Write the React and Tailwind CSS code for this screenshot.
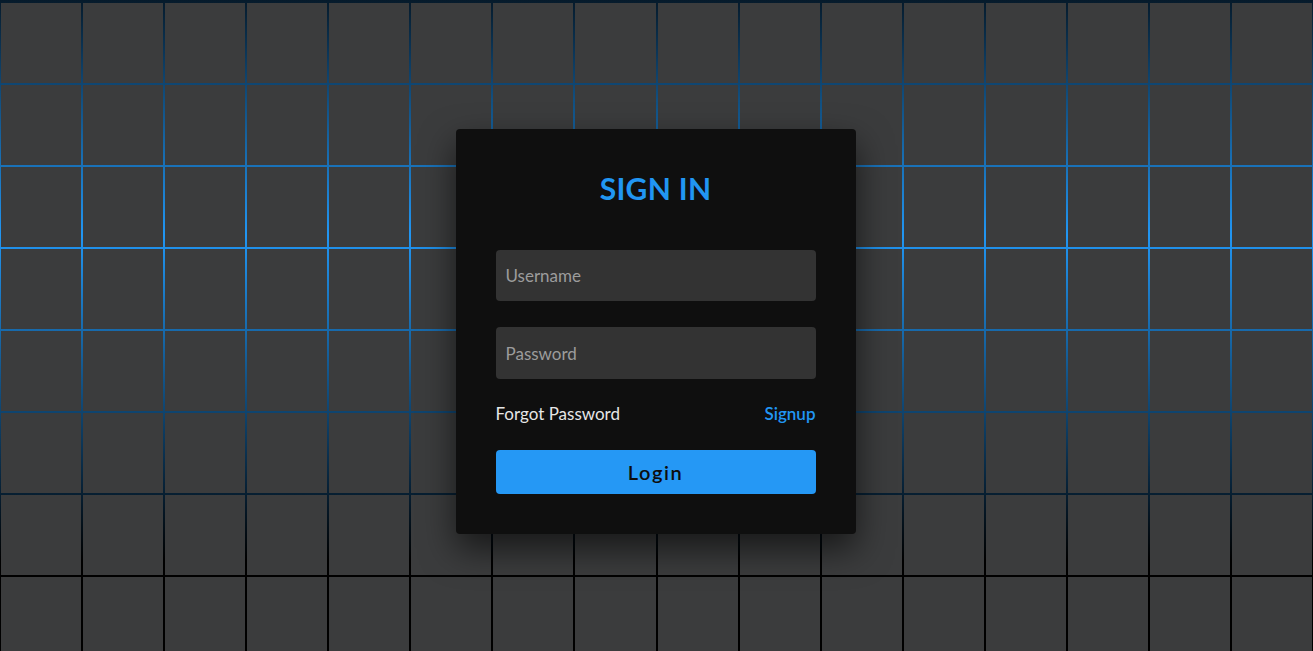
const TILES = Array.from({ length: 128 }, (_, i) => i)

export default function App() {
  return (
    <section className="relative h-screen w-screen overflow-hidden bg-[linear-gradient(#000_-50px,#2196f3_235px,#000_560px)] font-['Lato',sans-serif]">
      {/* tile grid, the gradient shows through the gaps */}
      <div className="flex flex-wrap justify-center gap-[2px] pt-[3px]">
        {TILES.map((i) => (
          <span
            key={i}
            className="block h-[calc(6.25vw-2px)] w-[calc(6.25vw-2px)] bg-[#3b3c3d]"
          />
        ))}
      </div>

      {/* sign-in card */}
      <div className="absolute left-1/2 top-[129px] ml-[-1px] flex w-[400px] -translate-x-1/2 flex-col rounded-[4px] bg-[#0f0f0f] p-[40px] shadow-[0_15px_35px_rgba(0,0,0,0.6)]">
        <h2 className="text-center text-[30px] font-bold leading-[38px] tracking-[0.01em] text-[#2196f3]">
          SIGN IN
        </h2>

        <input
          type="text"
          placeholder="Username"
          className="mt-[43px] h-[51px] w-full rounded-[4px] bg-[#333] px-[10px] text-[17px] text-white outline-none placeholder:text-[#9c9c9c]"
        />
        <input
          type="password"
          placeholder="Password"
          className="mt-[26px] h-[52px] w-full rounded-[4px] bg-[#333] px-[10px] text-[17px] text-white outline-none placeholder:text-[#9c9c9c]"
        />

        <div className="mt-[23px] flex items-center justify-between text-[17px] leading-[24px]">
          <a href="#" className="text-[#e6e6e6]">
            Forgot Password
          </a>
          <a href="#" className="font-semibold text-[#2196f3]">
            Signup
          </a>
        </div>

        <button className="mt-[24px] h-[44px] w-full rounded-[4px] bg-[#2598f5] text-[20px] font-semibold tracking-[0.08em] text-[#0d0d0d]">
          Login
        </button>
      </div>
    </section>
  )
}
